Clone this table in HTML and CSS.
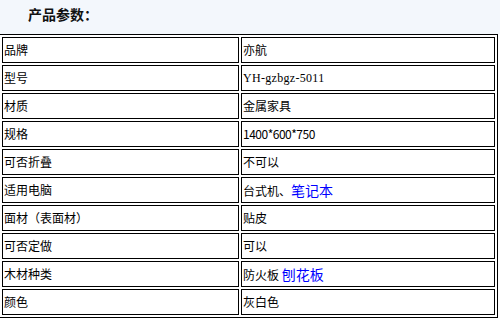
FILE: index.html
```html
<!DOCTYPE html>
<html lang="zh-CN">
<head>
  <meta charset="UTF-8">
  <title>产品参数</title>
  <link rel="stylesheet" href="styles.css">
</head>
<body>
  <div class="section-title">产品参数：</div>
  <table class="params">
    <tr><td class="name">品牌</td><td>亦航</td></tr>
    <tr><td class="name">型号</td><td class="code">YH-gzbgz-5011</td></tr>
    <tr><td class="name">材质</td><td>金属家具</td></tr>
    <tr><td class="name">规格</td><td class="num">1400*600*750</td></tr>
    <tr><td class="name">可否折叠</td><td>不可以</td></tr>
    <tr><td class="name">适用电脑</td><td>台式机、<a class="kw" href="#">笔记本</a></td></tr>
    <tr><td class="name">面材（表面材）</td><td>贴皮</td></tr>
    <tr><td class="name">可否定做</td><td>可以</td></tr>
    <tr><td class="name">木材种类</td><td>防火板 <a class="kw" href="#">刨花板</a></td></tr>
    <tr><td class="name">颜色</td><td>灰白色</td></tr>
  </table>
</body>
</html>
```

FILE: styles.css
```css
body {
  margin: 0;
  background: #fff;
  color: #000;
  font-family: "Noto Sans CJK SC", "Liberation Sans", sans-serif;
  font-size: 12px;
}

.section-title {
  height: 34px;
  line-height: 28px;
  padding-left: 28px;
  background: #f3f7fc;
  font-size: 14px;
  font-weight: bold;
  color: #111;
}

.params {
  margin-left: -1px;
  width: 499px;
  table-layout: fixed;
  border-collapse: separate;
  border-spacing: 2px;
  border: 1px solid #000;
}

.params td {
  height: 24px;
  padding: 0 1px;
  border: 1px solid #000;
  vertical-align: middle;
  line-height: 16px;
  white-space: nowrap;
}

.params td.name {
  width: 233px;
}

/* model numbers use the old serif latin face */
.params td.code {
  font-family: "Liberation Serif", serif;
  font-size: 12px;
  letter-spacing: 0.3px;
}

.params td.num {
  letter-spacing: -0.5px;
}

.kw {
  color: #0000ff;
  font-size: 14px;
  text-decoration: none;
}
```
